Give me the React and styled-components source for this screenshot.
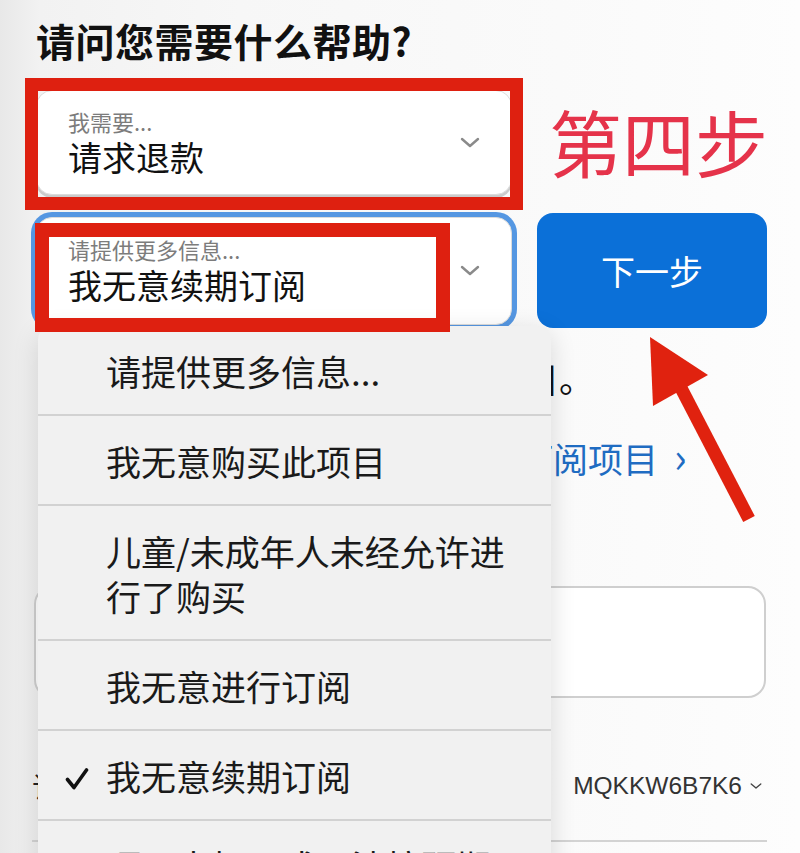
import React from 'react'
import styled, { createGlobalStyle } from 'styled-components'

const GlobalStyle = createGlobalStyle`
  html, body { margin: 0; padding: 0; }
  body {
    background: #f7f7f7;
    font-family: "Noto Sans CJK SC", "Noto Sans", sans-serif;
  }
`

const Screen = styled.div`
  position: relative;
  width: 800px;
  height: 853px;
  overflow: hidden;
  background: linear-gradient(90deg, #e8e8e8 0%, #f2f2f2 5%, #f7f7f7 30%, #fafafa 70%, #fdfdfd 100%);
  font-family: "Noto Sans CJK SC", "Noto Sans", sans-serif;
`

const Content = styled.div`
  padding: 16px 33px 0 36px;
`

const Title = styled.h1`
  margin: 0;
  font-size: 39px;
  line-height: 48px;
  font-weight: 700;
  color: #111;
  letter-spacing: 0.5px;
`

const Row = styled.div`
  display: flex;
  align-items: center;
  margin-top: ${p => p.$gap}px;
`

const Field = styled.div`
  box-sizing: border-box;
  width: 476px;
  height: ${p => p.$h}px;
  display: flex;
  align-items: center;
  justify-content: space-between;
  padding: 0 31px 0 31px;
  background: #fff;
  border: 1px solid #dcdcdc;
  border-radius: 16px;
  box-shadow: ${p => (p.$focus ? '0 0 0 5px #5597e2' : '0 3px 0 #cbcbcb')};
`

const FieldText = styled.div`
  display: flex;
  flex-direction: column;
`

const FieldLabel = styled.span`
  font-size: 22px;
  line-height: 28px;
  color: #7c7c7c;
`

const FieldValue = styled.span`
  font-size: 34px;
  line-height: 44px;
  color: #111;
`

const NextButton = styled.button`
  width: 230px;
  height: 115px;
  margin-left: 25px;
  border: none;
  border-radius: 16px;
  background: #0b70d8;
  color: #fff;
  font-family: inherit;
  font-size: 34px;
`

const Paragraph = styled.p`
  margin: 27px 0 0 ${p => p.$indent}px;
  font-size: 35px;
  line-height: 45px;
  color: #111;
  white-space: nowrap;
`

const LinkLine = styled.a`
  display: block;
  margin: 32px 0 0 ${p => p.$indent}px;
  font-size: 35px;
  line-height: 45px;
  color: #1f6cc2;
  text-decoration: none;
  white-space: nowrap;
`

const LinkChevron = styled.span`
  margin-left: 16px;
  font-size: 42px;
`

const TextBox = styled.div`
  box-sizing: border-box;
  margin: 106px 0 0 -2px;
  width: 732px;
  height: 112px;
  background: #fff;
  border: 2px solid #cfcfcf;
  border-radius: 18px;
`

const OrderRow = styled.div`
  display: flex;
  justify-content: space-between;
  align-items: center;
  margin: 63px 0 0 -4px;
  padding: 10px 5px 39px 0;
  border-bottom: 2px solid #d3d3d3;
  line-height: 30px;
`

const OrderLabel = styled.span`
  font-size: 28px;
  color: #222;
`

const OrderValue = styled.span`
  display: flex;
  align-items: center;
  gap: 8px;
  font-family: "Liberation Sans", Arial, sans-serif;
  font-size: 24.5px;
  color: #333;
`

const Menu = styled.div`
  position: absolute;
  left: 38px;
  top: 326px;
  width: 513px;
  height: 560px;
  background: #f1f1f1;
  border-radius: 14px 14px 0 0;
  box-shadow: 0 6px 26px rgba(0, 0, 0, 0.14);
`

const MenuItem = styled.div`
  display: grid;
  grid-template-columns: 41px 1fr;
  align-items: center;
  padding: 21.5px 31px 21.5px 27px;
  font-size: 35px;
  line-height: 45px;
  color: #1a1a1a;
  border-bottom: 2px solid #d2d2d2;
`

const Frame = styled.div`
  position: absolute;
  box-sizing: border-box;
  left: ${p => p.$x}px;
  top: ${p => p.$y}px;
  width: ${p => p.$w}px;
  height: ${p => p.$h}px;
  border: ${p => p.$t}px solid #de2010;
`

const StepNote = styled.div`
  position: absolute;
  left: 549px;
  top: 104px;
  font-size: 73px;
  line-height: 73px;
  color: #e5334a;
  font-weight: 400;
`

const ArrowSvg = styled.svg`
  position: absolute;
  left: 640px;
  top: 330px;
`

const Chevron = ({ w = 20, h = 11, color = '#8a8a8a', sw = 2.4 }) => (
  <svg width={w} height={h} viewBox="0 0 20 11">
    <path d="M2 2 L10 9 L18 2" fill="none" stroke={color} strokeWidth={sw} strokeLinecap="round" strokeLinejoin="round" />
  </svg>
)

const Check = () => (
  <svg width="24" height="24" viewBox="0 0 24 24">
    <path d="M2.5 12.5 L9 20.5 L21.5 3" fill="none" stroke="#111" strokeWidth="3.6" strokeLinecap="round" strokeLinejoin="round" />
  </svg>
)

const options = [
  '请提供更多信息...',
  '我无意购买此项目',
  '儿童/未成年人未经允许进行了购买',
  '我无意进行订阅',
  '我无意续期订阅',
  '项目未打开或无法按预期运作',
]

export default function App() {
  const selected = '我无意续期订阅'
  return (
    <Screen>
      <GlobalStyle />
      <Content>
        <Title>请问您需要什么帮助?</Title>
        <Row $gap={26}>
          <Field $h={105}>
            <FieldText>
              <FieldLabel>我需要...</FieldLabel>
              <FieldValue>请求退款</FieldValue>
            </FieldText>
            <Chevron />
          </Field>
        </Row>
        <Row $gap={18}>
          <Field $h={108} $focus>
            <FieldText>
              <FieldLabel>请提供更多信息...</FieldLabel>
              <FieldValue>{selected}</FieldValue>
            </FieldText>
            <Chevron />
          </Field>
          <NextButton>下一步</NextButton>
        </Row>
        <Paragraph $indent={68}>请选择您想要申请退款的项目。</Paragraph>
        <LinkLine $indent={412}>
          管理订阅项目<LinkChevron>›</LinkChevron>
        </LinkLine>
        <TextBox />
        <OrderRow>
          <OrderLabel>订单号</OrderLabel>
          <OrderValue>
            MQKKW6B7K6
            <Chevron w={12} h={8} color="#444" sw={2.2} />
          </OrderValue>
        </OrderRow>
      </Content>

      <Menu>
        {options.map(opt => (
          <MenuItem key={opt}>
            <span>{opt === selected ? <Check /> : null}</span>
            <span>{opt}</span>
          </MenuItem>
        ))}
      </Menu>

      <Frame $x={25} $y={78} $w={498} $h={132} $t={13} />
      <Frame $x={35} $y={223} $w={415} $h={109} $t={14} />
      <StepNote>第四步</StepNote>

      <ArrowSvg width="120" height="200" viewBox="0 0 120 200">
        <line x1="41" y1="58" x2="109" y2="189" stroke="#e0220f" strokeWidth="13" />
        <polygon points="10,7 13,76 68,45" fill="#e0220f" />
      </ArrowSvg>
    </Screen>
  )
}
